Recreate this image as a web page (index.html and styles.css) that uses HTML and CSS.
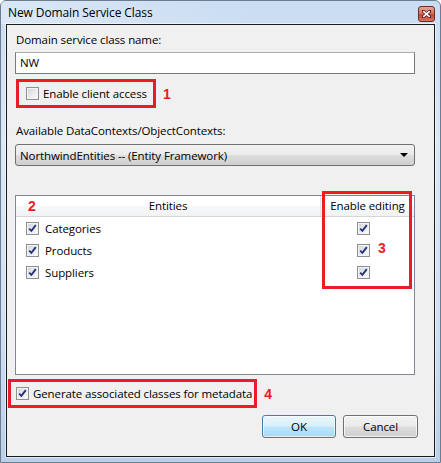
FILE: index.html
```html
<!DOCTYPE html>
<html lang="en">
<head>
    <meta charset="UTF-8">
    <meta name="viewport" content="width=device-width, initial-scale=1.0">
    <title>New Domain Service Class</title>
    <link rel="stylesheet" href="styles.css">
</head>
<body>
    <div class="window">
        <div class="titlebar">
            <span class="title">New Domain Service Class</span>
            <span class="close-btn">
                <svg width="9" height="8" viewBox="0 0 9 8">
                    <path d="M1 1 L8 7 M8 1 L1 7" stroke="#4a1a14" stroke-width="3" stroke-linecap="square"/>
                    <path d="M1.2 1.2 L7.8 6.8 M7.8 1.2 L1.2 6.8" stroke="#fff" stroke-width="1.6"/>
                </svg>
            </span>
        </div>

        <div class="client">
            <div class="field-label">Domain service class name:</div>
            <div class="textbox">NW</div>

            <div class="callout-row row-client">
                <div class="callout callout-client">
                    <span class="checkbox"></span>
                    <span>Enable client access</span>
                </div>
                <span class="callout-num">1</span>
            </div>

            <div class="field-label label-contexts">Available DataContexts/ObjectContexts:</div>
            <div class="combo">
                <span>NorthwindEntities -- (Entity Framework)</span>
                <span class="combo-arrow"></span>
            </div>

            <div class="entity-list">
                <div class="list-header">
                    <div class="col-name">Entities</div>
                    <div class="col-edit">Enable editing</div>
                </div>
                <div class="list-row">
                    <div class="col-name"><span class="checkbox checked"><svg width="11" height="11" viewBox="0 0 11 11"><path d="M2.2 5.6 L4.4 7.8 L8.8 2.2" fill="none" stroke="#24347c" stroke-width="1.9"/></svg></span>Categories</div>
                    <div class="col-edit"><span class="checkbox checked"><svg width="11" height="11" viewBox="0 0 11 11"><path d="M2.2 5.6 L4.4 7.8 L8.8 2.2" fill="none" stroke="#24347c" stroke-width="1.9"/></svg></span></div>
                </div>
                <div class="list-row">
                    <div class="col-name"><span class="checkbox checked"><svg width="11" height="11" viewBox="0 0 11 11"><path d="M2.2 5.6 L4.4 7.8 L8.8 2.2" fill="none" stroke="#24347c" stroke-width="1.9"/></svg></span>Products</div>
                    <div class="col-edit"><span class="checkbox checked"><svg width="11" height="11" viewBox="0 0 11 11"><path d="M2.2 5.6 L4.4 7.8 L8.8 2.2" fill="none" stroke="#24347c" stroke-width="1.9"/></svg></span></div>
                </div>
                <div class="list-row">
                    <div class="col-name"><span class="checkbox checked"><svg width="11" height="11" viewBox="0 0 11 11"><path d="M2.2 5.6 L4.4 7.8 L8.8 2.2" fill="none" stroke="#24347c" stroke-width="1.9"/></svg></span>Suppliers</div>
                    <div class="col-edit"><span class="checkbox checked"><svg width="11" height="11" viewBox="0 0 11 11"><path d="M2.2 5.6 L4.4 7.8 L8.8 2.2" fill="none" stroke="#24347c" stroke-width="1.9"/></svg></span></div>
                </div>

                <!-- annotation marks drawn over the list -->
                <span class="callout-num num-2">2</span>
                <div class="callout callout-edit"></div>
                <span class="callout-num num-3">3</span>
            </div>

            <div class="callout-row row-metadata">
                <div class="callout callout-metadata">
                    <span class="checkbox checked"><svg width="11" height="11" viewBox="0 0 11 11"><path d="M2.2 5.6 L4.4 7.8 L8.8 2.2" fill="none" stroke="#24347c" stroke-width="1.9"/></svg></span>
                    <span>Generate associated classes for metadata</span>
                </div>
                <span class="callout-num">4</span>
            </div>

            <div class="buttons">
                <div class="btn btn-default">OK</div>
                <div class="btn">Cancel</div>
            </div>
        </div>
    </div>
</body>
</html>
```

FILE: styles.css
```css
html, body {
    margin: 0;
    padding: 0;
}
body {
    width: 441px;
    height: 463px;
    font-family: "Segoe UI", "Open Sans", sans-serif;
    font-size: 11.5px;
    letter-spacing: -0.1px;
    color: #000;
    overflow: hidden;
}
.window {
    width: 441px;
    height: 463px;
    box-sizing: border-box;
    border: 1px solid #6c7d92;
    border-radius: 6px 6px 0 0;
    background: linear-gradient(180deg, #c9dcf2 0%, #dae8f7 30%, #cfe0f3 70%, #b9d0e8 100%);
    display: flex;
    flex-direction: column;
}
.titlebar {
    height: 23px;
    display: flex;
    align-items: center;
    justify-content: space-between;
    padding: 0 5px 0 7px;
    background: linear-gradient(90deg, rgba(255,255,255,0.3), rgba(255,255,255,0) 60%);
}
.title {
    font-size: 12px;
    color: #000;
}
.close-btn {
    width: 17px;
    height: 16px;
    box-sizing: border-box;
    margin-top: 2px;
    border: 1px solid #6d2b24;
    border-radius: 3px;
    background: linear-gradient(180deg, #e8a493 0%, #d47561 45%, #c24a34 55%, #d7745e 100%);
    display: flex;
    align-items: center;
    justify-content: center;
}

/* dialog body */
.client {
    flex: 1;
    margin: 0 5px 5px 5px;
    border: 1px solid #1a1a1a;
    box-shadow: 0 0 0 1px rgba(255,255,255,0.55);
    background: #f0f0f0;
    padding: 7px 19px 0 8px;
    display: flex;
    flex-direction: column;
}
.field-label {
    height: 16px;
    line-height: 16px;
    padding-left: 1px;
}
.label-contexts {
    margin-top: 15px;
}
.textbox {
    margin-top: 4px;
    height: 22px;
    box-sizing: border-box;
    border: 1px solid #7a7a7a;
    border-top-color: #abadb3;
    background: #fff;
    padding: 0 4px;
    line-height: 20px;
}

/* red annotation boxes and numbers */
.callout-row {
    display: flex;
    align-items: center;
}
.callout {
    box-sizing: border-box;
    border: 3px solid #ed1c24;
}
.callout-row .callout {
    height: 29px;
    display: flex;
    align-items: center;
}
.row-client {
    margin-top: 5px;
}
.callout-client {
    margin-left: 1px;
    padding: 0 6px 0 7px;
    gap: 4px;
}
.row-metadata {
    margin-top: 4px;
}
.callout-metadata {
    margin-left: -7px;
    padding: 0 2px 0 5px;
    gap: 4px;
}
.callout-num {
    color: #ed1c24;
    font-family: "Liberation Sans", Arial, sans-serif;
    font-weight: bold;
    font-size: 14px;
    letter-spacing: 0;
    margin-left: 7px;
}

/* combo box */
.combo {
    margin-top: 5px;
    height: 22px;
    box-sizing: border-box;
    border: 1px solid #707070;
    border-radius: 3px;
    background: linear-gradient(180deg, #f2f2f2 0%, #ebebeb 48%, #dddddd 52%, #cfcfcf 100%);
    display: flex;
    align-items: center;
    justify-content: space-between;
    padding: 0 6px 0 4px;
}
.combo-arrow {
    width: 0;
    height: 0;
    border-left: 4px solid transparent;
    border-right: 4px solid transparent;
    border-top: 4px solid #000;
}

/* entity grid */
.entity-list {
    position: relative;
    margin-top: 29px;
    height: 180px;
    box-sizing: border-box;
    border: 1px solid #828790;
    background: #fff;
}
.list-header {
    display: flex;
    height: 21px;
    box-sizing: border-box;
    border-bottom: 1px solid #d5d5d5;
    background: linear-gradient(180deg, #ffffff 0%, #ffffff 50%, #f7f8fa 51%, #f1f2f4 100%);
    line-height: 20px;
}
.list-header .col-name {
    width: 304px;
    text-align: center;
    border-right: 1px solid #e3e4e6;
}
.list-header .col-edit {
    flex: 1;
    text-align: center;
}
.list-row {
    display: flex;
    height: 22px;
    align-items: center;
}
.list-row:first-of-type {
    margin-top: 1px;
}
.list-row .col-name {
    width: 305px;
    display: flex;
    align-items: center;
    gap: 6px;
    padding-left: 10px;
    box-sizing: border-box;
}
.list-row .col-edit {
    flex: 1;
    padding-left: 36px;
    display: flex;
}
.num-2 {
    position: absolute;
    left: 12px;
    top: 2px;
    margin: 0;
}
.callout-edit {
    position: absolute;
    left: 306px;
    top: -5px;
    width: 90px;
    height: 98px;
}
.num-3 {
    position: absolute;
    left: 362px;
    top: 44px;
    margin: 0;
}

/* checkboxes */
.checkbox {
    width: 13px;
    height: 13px;
    box-sizing: border-box;
    border: 1px solid #8e8f8f;
    background: linear-gradient(135deg, #cfd2d7 0%, #e9eaec 50%, #fbfbfb 100%);
    box-shadow: inset 0 0 0 1px #f4f4f4;
    display: inline-flex;
    align-items: center;
    justify-content: center;
    flex-shrink: 0;
}

/* dialog buttons */
.buttons {
    margin-top: 7px;
    margin-right: -3px;
    display: flex;
    justify-content: flex-end;
    gap: 7px;
}
.btn {
    width: 75px;
    height: 23px;
    box-sizing: border-box;
    border: 1px solid #707070;
    border-radius: 3px;
    background: linear-gradient(180deg, #f2f2f2 0%, #ebebeb 48%, #dddddd 52%, #cfcfcf 100%);
    box-shadow: inset 0 0 0 1px rgba(255,255,255,0.7);
    text-align: center;
    line-height: 21px;
}
.btn-default {
    width: 74px;
    border-color: #3c7fb1;
    background: linear-gradient(180deg, #eaf6fd 0%, #d9f0fc 48%, #bee6fd 52%, #a7d9f5 100%);
    box-shadow: inset 0 0 0 1px rgba(255,255,255,0.6);
}
```
